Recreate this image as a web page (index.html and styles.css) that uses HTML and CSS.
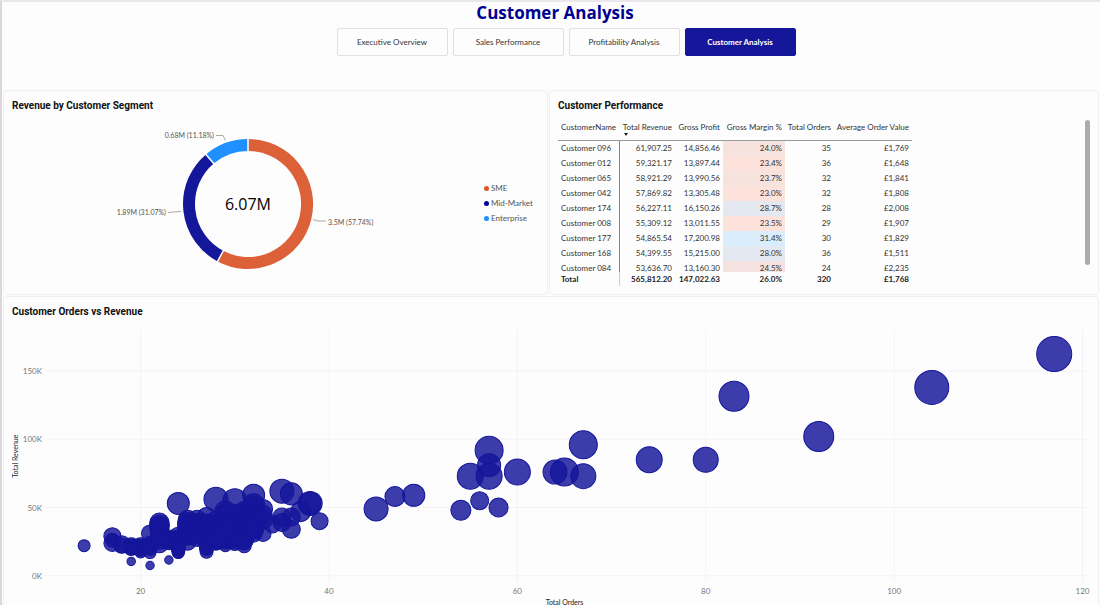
FILE: index.html
```html
<!DOCTYPE html>
<html lang="en">
<head>
    <meta charset="utf-8">
    <title>Customer Analysis</title>
    <link rel="stylesheet" href="styles.css">
</head>
<body>
    <header class="page-header">
        <h1>Customer Analysis</h1>
        <nav class="tabs">
            <a href="#executive">Executive Overview</a>
            <a href="#sales">Sales Performance</a>
            <a href="#profitability">Profitability Analysis</a>
            <a href="#customers" class="active">Customer Analysis</a>
        </nav>
    </header>

    <main class="report">
        <section class="panel">
            <h2>Revenue by Customer Segment</h2>
            <div class="donut-body">
                <svg class="donut" viewBox="0 0 280 150" width="280" height="150">
                    <g fill="none" stroke-width="12">
                        <path stroke="#dc6139" d="M140 16A59 59 0 1 1 112.4 127.1"/>
                        <path stroke="#14179a" d="M112.4 127.1A59 59 0 0 1 101.8 30"/>
                        <path stroke="#1e90ff" d="M101.8 30A59 59 0 0 1 140 16"/>
                    </g>
                    <g stroke="#fff" stroke-width="1.5">
                        <line x1="140" y1="24" x2="140" y2="8"/>
                        <line x1="140" y1="24" x2="140" y2="8" transform="rotate(207.9 140 75)"/>
                        <line x1="140" y1="24" x2="140" y2="8" transform="rotate(319.7 140 75)"/>
                    </g>
                    <g fill="none" stroke="#a8a8a8">
                        <path d="M108 6.500h7l2.500 5"/>
                        <path d="M60 83.500l5-.500 8-.500"/>
                        <path d="M205 90.500l5 1.500h8"/>
                    </g>
                    <text class="label" x="106" y="9" text-anchor="end">0.68M (11.18%)</text>
                    <text class="label" x="58" y="86" text-anchor="end">1.89M (31.07%)</text>
                    <text class="label" x="220" y="96">3.5M (57.74%)</text>
                    <text class="total" x="140" y="81" text-anchor="middle">6.07M</text>
                </svg>
                <ul class="legend">
                    <li class="sme">SME</li>
                    <li class="mid">Mid-Market</li>
                    <li class="ent">Enterprise</li>
                </ul>
            </div>
        </section>

        <section class="panel">
            <h2>Customer Performance</h2>
            <div class="table-body">
                <div class="table-scroll">
                    <table>
                        <thead>
                            <tr>
                                <th>CustomerName</th>
                                <th class="sorted">Total Revenue</th>
                                <th>Gross Profit</th>
                                <th>Gross Margin %</th>
                                <th>Total Orders</th>
                                <th>Average Order Value</th>
                            </tr>
                        </thead>
                        <tbody>
                            <tr><td>Customer 096</td><td>61,907.25</td><td>14,856.46</td><td class="m2">24.0%</td><td>35</td><td>£1,769</td></tr>
                            <tr><td>Customer 012</td><td>59,321.17</td><td>13,897.44</td><td class="m1">23.4%</td><td>36</td><td>£1,648</td></tr>
                            <tr><td>Customer 065</td><td>58,921.29</td><td>13,990.56</td><td class="m2">23.7%</td><td>32</td><td>£1,841</td></tr>
                            <tr><td>Customer 042</td><td>57,869.82</td><td>13,305.48</td><td class="m1">23.0%</td><td>32</td><td>£1,808</td></tr>
                            <tr><td>Customer 174</td><td>56,227.11</td><td>16,150.26</td><td class="m4">28.7%</td><td>28</td><td>£2,008</td></tr>
                            <tr><td>Customer 008</td><td>55,309.12</td><td>13,011.55</td><td class="m1">23.5%</td><td>29</td><td>£1,907</td></tr>
                            <tr><td>Customer 177</td><td>54,865.54</td><td>17,200.98</td><td class="m5">31.4%</td><td>30</td><td>£1,829</td></tr>
                            <tr><td>Customer 168</td><td>54,399.55</td><td>15,215.00</td><td class="m4">28.0%</td><td>36</td><td>£1,511</td></tr>
                            <tr><td>Customer 084</td><td>53,636.70</td><td>13,160.30</td><td class="m3">24.5%</td><td>24</td><td>£2,235</td></tr>
                        </tbody>
                        <tfoot>
                            <tr><td>Total</td><td>565,812.20</td><td>147,022.63</td><td>26.0%</td><td>320</td><td>£1,768</td></tr>
                        </tfoot>
                    </table>
                </div>
                <div class="scrollbar"></div>
            </div>
        </section>

        <section class="panel wide">
            <h2>Customer Orders vs Revenue</h2>
            <svg id="scatter" class="scatter" viewBox="0 0 1080 288"></svg>
        </section>
    </main>
    <script src="script.js"></script>
</body>
</html>
```
FILE: styles.css
```css
* {
    box-sizing: border-box;
}

body {
    margin: 0;
    height: 100vh;
    overflow: hidden;
    border-top: 2px solid #eae8ec;
    border-left: 2px solid #dad8dc;
    background: #fdfdfe;
    font-family: Lato, "Open Sans", sans-serif;
    font-size: 8px;
    color: #333;
}

.page-header {
    display: flex;
    flex-direction: column;
    align-items: center;
    height: 88px;
    padding-left: 8px;
}

h1 {
    margin: 0 0 4px;
    font-family: "Open Sans", sans-serif;
    font-size: 17px;
    line-height: 22px;
    font-weight: 700;
    color: #00008f;
}

.tabs {
    display: flex;
    gap: 5px;
    margin-left: 22px;
}

.tabs a {
    display: flex;
    align-items: center;
    justify-content: center;
    width: 111px;
    height: 28px;
    border: 1px solid #e0e0e2;
    border-radius: 2px;
    color: #333;
    text-decoration: none;
}

.tabs a.active {
    background: #14179a;
    border-color: #14179a;
    color: #fff;
    font-weight: 700;
}

.report {
    display: grid;
    grid-template-columns: 545fr 550fr;
    grid-template-rows: 205px auto;
    gap: 1px;
    padding: 0 1px;
}

.panel {
    display: flex;
    flex-direction: column;
    border: 1px solid #f0eff2;
    border-radius: 4px;
    padding: 7px 8px 0;
    min-width: 0;
}

.panel.wide {
    grid-column: 1 / 3;
    padding-right: 5px;
}

h2 {
    margin: 0;
    font-family: Roboto, sans-serif;
    font-size: 10px;
    line-height: 15px;
    font-weight: 700;
    color: #111;
}

/* donut */
.donut-body {
    flex: 1;
    display: flex;
    align-items: center;
}

.donut {
    margin: 0 auto;
}

.label {
    font-size: 7px;
    fill: #555;
}

.total {
    font-family: "Open Sans", sans-serif;
    font-size: 16px;
    fill: #000;
}

.legend {
    list-style: none;
    margin: 0;
    padding: 0;
    width: 55px;
    line-height: 15px;
    color: #555;
}

.legend li {
    display: flex;
    align-items: center;
    gap: 2px;
    white-space: nowrap;
}

.legend li::before {
    content: "";
    width: 5px;
    height: 5px;
    border-radius: 50%;
}

.sme::before { background: #e0541f; }
.mid::before { background: #00009c; }
.ent::before { background: #1e90ff; }

/* table */
.table-body {
    display: flex;
    justify-content: space-between;
    padding-top: 2px;
}

.table-scroll {
    height: 171px;
    overflow: hidden;
}

table {
    table-layout: fixed;
    width: 354px;
    border-collapse: separate;
    border-spacing: 0;
}

th, td {
    height: 15px;
    padding: 0 3px 0 0;
    line-height: 15px;
    text-align: right;
    white-space: nowrap;
}

th {
    position: sticky;
    top: 0;
    height: 26px;
    border-bottom: 1px solid #999;
    background: #fdfdfe;
    font-weight: 400;
}

th:nth-child(1) { width: 62px; }
th:nth-child(2) { width: 55px; }
th:nth-child(3) { width: 48px; }
th:nth-child(4) { width: 62px; }
th:nth-child(5) { width: 49px; }
th:nth-child(6) { width: 78px; }

th:first-child, td:first-child {
    padding-left: 3px;
    text-align: left;
}

td:first-child {
    border-right: 1px solid #888;
}

.sorted::after {
    content: "";
    position: absolute;
    left: 4px;
    bottom: 4px;
    border: 2px solid transparent;
    border-top: 3px solid #222;
    border-bottom: 0;
}

tfoot td {
    position: sticky;
    bottom: 0;
    height: 14px;
    line-height: 14px;
    background: #fdfdfe;
    font-weight: 700;
    color: #222;
}

tfoot td:first-child {
    border-right-color: #ccc;
}

.m1 { background: #fde2dc; }
.m2 { background: #f7e3de; }
.m3 { background: #f5e2e0; }
.m4 { background: #e3e8f1; }
.m5 { background: #d9edfd; }

.scrollbar {
    width: 5px;
    height: 145px;
    margin-top: 5px;
    border-radius: 3px;
    background: #aeabae;
}

/* scatter */
.scatter {
    width: 100%;
}

.grid {
    stroke: #f4f2f7;
}

.tick {
    fill: #777;
}

.axis-title {
    font-size: 7px;
    fill: #222;
}

.bubble {
    fill: #14169a;
    fill-opacity: 0.83;
    stroke: #14169a;
}
```
FILE: script.js
```javascript
// [orders, revenue in K, radius]
const customers = [
    [14, 22, 6], [17, 29, 8.5], [17, 24, 8.5], [17, 26, 7], [18, 23, 8.5], [19, 22, 8], [19, 20, 7],
    [19, 21, 8], [20, 20, 8], [21, 22, 8], [18, 22, 7.5], [20, 21, 8],
    [20, 22, 8], [20, 20, 7], [20, 17, 5.5], [21, 23, 8], [21, 20, 7], [21, 17, 6],
    [19, 10.5, 4.2], [21, 7.5, 4.2], [23, 11.5, 4.2], [21, 31, 8.5], [22, 39, 9.5], [22, 36, 9.5], [22, 34, 9.5],
    [22, 37, 10], [22, 31, 9], [22, 26, 9], [22, 23, 8.5], [22, 29, 9], [23, 27, 9], [23, 25, 8], [23, 26, 9],
    [24, 53, 11], [24, 29, 9], [24, 26, 9], [24, 22, 7], [24, 18, 6.5], [24, 17, 6], [24, 27, 9], [24, 20, 7],
    [25, 41, 9.5], [25, 38, 10], [25, 34, 10], [25, 29, 9], [25, 25, 8.5], [25, 36, 10], [25, 31, 10], [25, 39, 10],
    [26, 41, 9.5], [26, 37, 10], [26, 32, 10], [26, 28, 9], [26, 35, 10], [26, 30, 9], [26, 39, 9],
    [27, 43, 9.5], [27, 38, 10], [27, 33, 10], [27, 28, 10], [27, 24, 8], [27, 20, 7], [27, 17.5, 6.5], [27, 35, 10], [27, 30, 10], [27, 21, 7],
    [28, 56, 12], [28, 40, 10], [28, 35, 10], [28, 30, 10], [28, 25, 8.5], [28, 37, 10], [28, 32, 10], [28, 27, 10], [28, 26, 9],
    [29, 47, 10.5], [29, 41, 10], [29, 36, 10], [29, 31, 10], [29, 26, 9], [29, 22, 6], [29, 45, 10], [29, 38, 11], [29, 33, 11], [29, 28, 10],
    [30, 55, 12], [30, 43, 10], [30, 38, 10], [30, 32, 10], [30, 27, 10], [30, 24, 7.5], [30, 45, 10], [30, 40, 11], [30, 35, 11], [30, 29, 10],
    [31, 47, 10], [31, 41, 10], [31, 36, 10], [31, 31, 10], [31, 26, 9], [31, 22, 7], [31, 44, 11], [31, 38, 11], [31, 33, 11], [31, 28, 10], [31, 24, 7],
    [32, 59, 11], [32, 52, 11], [32, 48, 11], [32, 43, 11], [32, 38, 11], [32, 34, 10], [32, 31, 8.5], [32, 50, 11], [32, 45, 11], [32, 40, 11], [32, 35, 10],
    [33, 49, 9.5], [33, 45, 9], [33, 41, 9.5], [33, 31, 8], [34, 38, 9],
    [35, 62, 12], [36, 60, 11], [35, 43, 9], [35, 39, 9], [36, 43, 9], [36, 34, 9],
    [37, 47, 10], [38, 53, 12], [38, 53, 11], [39, 40, 8.5],
    [45, 49, 12], [47, 58, 10], [49, 59, 11], [54, 48, 10], [56, 55, 9], [58, 50, 9.5],
    [55, 73, 13], [57, 92, 14], [57, 81, 11.5], [57, 73, 13], [60, 76, 13],
    [64, 76, 12], [65, 76, 14], [67, 96, 14], [67, 73, 12.5], [74, 85, 13], [80, 85, 12.5],
    [83, 131.5, 15], [92, 102, 15], [104, 138, 17], [117, 162.5, 17.5]
];

const px = orders => 128.5 + (orders - 20) * 9.41;
const py = revenue => 256.5 - revenue * 1.363;

let out = '';

for (let k = 0; k <= 150; k += 50) {
    out += `<line class="grid" x1="34" x2="1074" y1="${py(k)}" y2="${py(k)}"/>`;
    out += `<text class="tick" x="30" y="${py(k) + 3}" text-anchor="end">${k}K</text>`;
}

for (let o = 20; o <= 120; o += 20) {
    out += `<line class="grid" x1="${px(o)}" x2="${px(o)}" y1="11" y2="264"/>`;
    out += `<text class="tick" x="${px(o)}" y="275" text-anchor="middle">${o}</text>`;
}

customers.forEach(([o, k, r]) => {
    out += `<circle class="bubble" cx="${px(o)}" cy="${py(k)}" r="${r}"/>`;
});

out += '<text class="axis-title" x="552" y="286" text-anchor="middle">Total Orders</text>';
out += '<text class="axis-title" transform="translate(6 137) rotate(-90)" text-anchor="middle">Total Revenue</text>';

document.getElementById('scatter').innerHTML = out;
```
